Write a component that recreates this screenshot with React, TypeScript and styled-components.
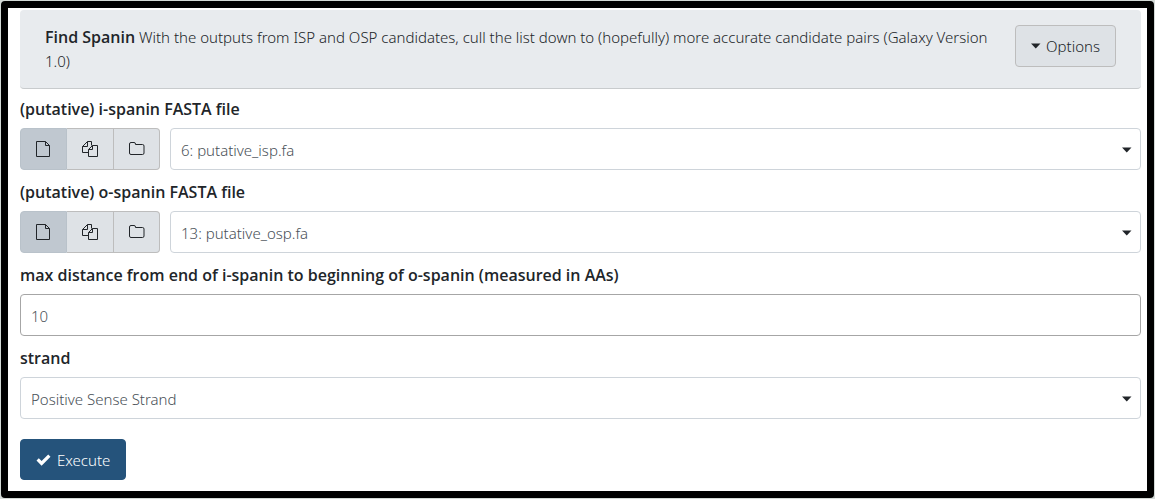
import React from "react";
import styled, { createGlobalStyle, css } from "styled-components";

const GlobalStyle = createGlobalStyle`
  *, *::before, *::after { box-sizing: border-box; }
  body {
    margin: 0;
    padding: 1px;
    background: #d3d9d6;
    color: #212529;
    font: 300 15px/24px "Noto Sans", "Open Sans", sans-serif;
  }
  button, input, select { font: inherit; }
`;

const Frame = styled.main`
  border: 7px solid #000;
  border-radius: 4px;
  background: #fff;
  padding: 2px 6px 11px 12px;
`;

const ToolHeader = styled.header`
  display: flex;
  align-items: flex-start;
  gap: 8px;
  padding: 15px 25px;
  border-bottom: 1px solid #c8cbcd;
  border-radius: 4px;
  background: #e8ebee;
`;

const ToolTitle = styled.p`
  flex: 1;
  margin: 0;
`;

const labelFont = css`
  font-family: "Open Sans", "Noto Sans", sans-serif;
  font-size: 16px;
  font-weight: 600;
`;

const Name = styled.strong`
  ${labelFont}
`;

const buttonBase = css`
  display: inline-flex;
  align-items: center;
  justify-content: center;
  border: 1px solid #bdbdbd;
  border-radius: 4px;
  background: #dee2e6;
  color: #212529;
  cursor: pointer;
`;

const OptionsButton = styled.button`
  ${buttonBase}
  height: 42px;
  padding: 0 15px;
  gap: 5px;
`;

const Form = styled.form`
  display: flex;
  flex-direction: column;
  gap: 10px;
  padding-top: 8px;
`;

const Field = styled.div`
  display: flex;
  flex-direction: column;
  gap: 7px;
`;

const Label = styled.label`
  ${labelFont}
  align-self: flex-start;
`;

const Row = styled.div`
  display: flex;
  gap: 10px;
`;

const Sources = styled.div`
  display: flex;
`;

const SourceButton = styled.button<{ $active?: boolean }>`
  ${buttonBase}
  width: 47px;
  height: 42px;
  padding: 0;
  border-radius: 0;
  ${(p) => p.$active && "background: #c0c8d0; border-color: #b9c2ca;"}
  & + & { border-left-width: 0; }
  &:first-child { border-radius: 4px 0 0 4px; }
  &:last-child { width: 46px; border-radius: 0 4px 4px 0; }
`;

const SelectBox = styled.div`
  flex: 1;
  display: grid;
  align-items: center;
  > * { grid-area: 1 / 1; }
  > svg { justify-self: end; margin: 2px 9px 0 0; pointer-events: none; }
`;

const control = css`
  width: 100%;
  height: 42px;
  padding: 2px 10px 0;
  border: 1px solid #ced4da;
  border-radius: 4px;
  background: #fff;
  color: #495057;
  appearance: none;
`;

const Select = styled.select`
  ${control}
`;

const TextInput = styled.input`
  ${control}
  border-color: #a6a6a6;
`;

const ExecuteButton = styled.button`
  ${buttonBase}
  align-self: flex-start;
  height: 41px;
  margin-top: 10px;
  padding: 0 15px;
  gap: 6px;
  border-color: #25537b;
  background: #25537b;
  color: #fff;
`;

const Caret = () => (
  <svg width="10" height="6" viewBox="0 0 10 6" aria-hidden="true">
    <path d="M0 0.5h9.5L4.75 5.5z" fill="#212529" />
  </svg>
);

const Check = () => (
  <svg width="15" height="12" viewBox="0 0 15 12" aria-hidden="true">
    <path d="M0.5 6.5 2.8 4.2 5.6 7 12.2 0.5 14.5 2.8 5.6 11.7z" fill="#fff" />
  </svg>
);

const glyph = { width: 16, height: 16, viewBox: "0 0 16 16", fill: "none", stroke: "#212529", "aria-hidden": true } as const;

const FileIcon = () => (
  <svg {...glyph}>
    <path d="M0.5 0.5h9l4 4v11h-13z M9.5 0.5v4h4" />
  </svg>
);

const CopyIcon = () => (
  <svg {...glyph}>
    <path d="M6.5 11.5h-6v-6l5-5h4v4 M5.5 0.5v5h-5" />
    <path d="M10.5 4.5h5v11h-9v-7l4-4z M10.5 4.5v4h-4" />
  </svg>
);

const FolderIcon = () => (
  <svg {...glyph}>
    <path d="M0.5 3a1.5 1.5 0 0 1 1.5-1.5h3a1.5 1.5 0 0 1 1.5 1.5v.5h7a1.5 1.5 0 0 1 1.5 1.5v7a1.5 1.5 0 0 1-1.5 1.5h-11.5a1.5 1.5 0 0 1-1.5-1.5z" />
  </svg>
);

function DatasetField({ id, label, value }: { id: string; label: string; value: string }) {
  return (
    <Field>
      <Label htmlFor={id}>{label}</Label>
      <Row>
        <Sources>
          <SourceButton type="button" $active aria-label="Single dataset"><FileIcon /></SourceButton>
          <SourceButton type="button" aria-label="Multiple datasets"><CopyIcon /></SourceButton>
          <SourceButton type="button" aria-label="Dataset collection"><FolderIcon /></SourceButton>
        </Sources>
        <SelectBox>
          <Select id={id}><option>{value}</option></Select>
          <Caret />
        </SelectBox>
      </Row>
    </Field>
  );
}

export default function App() {
  return (
    <>
      <GlobalStyle />
      <Frame>
        <ToolHeader>
          <ToolTitle>
            <Name>Find Spanin</Name> With the outputs from ISP and OSP candidates, cull the list down to (hopefully) more accurate candidate pairs (Galaxy Version 1.0)
          </ToolTitle>
          <OptionsButton type="button"><Caret />Options</OptionsButton>
        </ToolHeader>
        <Form onSubmit={(e) => e.preventDefault()}>
          <DatasetField id="isp" label="(putative) i-spanin FASTA file" value="6: putative_isp.fa" />
          <DatasetField id="osp" label="(putative) o-spanin FASTA file" value="13: putative_osp.fa" />
          <Field>
            <Label htmlFor="distance">max distance from end of i-spanin to beginning of o-spanin (measured in AAs)</Label>
            <TextInput id="distance" type="text" inputMode="numeric" defaultValue="10" />
          </Field>
          <Field>
            <Label htmlFor="strand">strand</Label>
            <SelectBox>
              <Select id="strand"><option>Positive Sense Strand</option></Select>
              <Caret />
            </SelectBox>
          </Field>
          <ExecuteButton type="submit"><Check />Execute</ExecuteButton>
        </Form>
      </Frame>
    </>
  );
}
